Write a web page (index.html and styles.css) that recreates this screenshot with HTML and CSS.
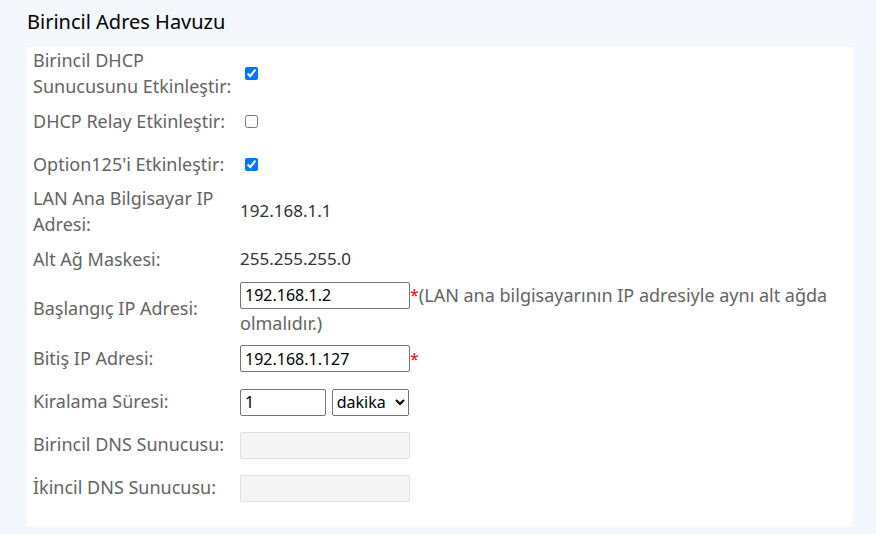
FILE: index.html
```html
<!DOCTYPE html>
<html lang="tr">
<head>
    <meta charset="UTF-8">
    <meta name="viewport" content="width=device-width, initial-scale=1.0">
    <title>DHCP Sunucusu</title>
    <link rel="stylesheet" href="styles.css">
</head>
<body>
    <div class="page">
        <h2 class="section-title">Birincil Adres Havuzu</h2>

        <div class="panel">
            <table class="form-table">
                <tr>
                    <td class="label">Birincil DHCP<br>Sunucusunu Etkinleştir:</td>
                    <td class="value"><input type="checkbox" id="primaryDhcp" checked></td>
                </tr>
                <tr>
                    <td class="label">DHCP Relay Etkinleştir:</td>
                    <td class="value"><input type="checkbox" id="dhcpRelay"></td>
                </tr>
                <tr>
                    <td class="label">Option125'i Etkinleştir:</td>
                    <td class="value"><input type="checkbox" id="option125" checked></td>
                </tr>
                <tr>
                    <td class="label">LAN Ana Bilgisayar IP Adresi:</td>
                    <td class="value text">192.168.1.1</td>
                </tr>
                <tr>
                    <td class="label">Alt Ağ Maskesi:</td>
                    <td class="value text">255.255.255.0</td>
                </tr>
                <tr>
                    <td class="label">Başlangıç IP Adresi:</td>
                    <td class="value">
                        <input type="text" class="ip-input" id="startIp" value="192.168.1.2"><span class="required">*</span><span class="hint">(LAN ana bilgisayarının IP adresiyle aynı alt ağda olmalıdır.)</span>
                    </td>
                </tr>
                <tr>
                    <td class="label">Bitiş IP Adresi:</td>
                    <td class="value">
                        <input type="text" class="ip-input" id="endIp" value="192.168.1.127"><span class="required">*</span>
                    </td>
                </tr>
                <tr>
                    <td class="label">Kiralama Süresi:</td>
                    <td class="value">
                        <input type="text" class="lease-input" id="leaseTime" value="1">
                        <select class="lease-unit" id="leaseUnit">
                            <option value="min" selected>dakika</option>
                            <option value="hour">saat</option>
                            <option value="day">gün</option>
                        </select>
                    </td>
                </tr>
                <tr>
                    <td class="label">Birincil DNS Sunucusu:</td>
                    <td class="value"><input type="text" class="ip-input" id="dns1" disabled></td>
                </tr>
                <tr>
                    <td class="label">İkincil DNS Sunucusu:</td>
                    <td class="value"><input type="text" class="ip-input" id="dns2" disabled></td>
                </tr>
            </table>
        </div>
    </div>
</body>
</html>
```

FILE: styles.css
```css
body {
    margin: 0;
    background: #f4f7fb;
    font-family: "Noto Sans", Arial, sans-serif;
    font-size: 18px;
}
.page {
    padding: 0 24px 9px 27px;
}
.section-title {
    margin: 0;
    padding-top: 9px;
    height: 38px;
    font-size: 20px;
    font-weight: normal;
    line-height: 26px;
    color: #000;
}
.panel {
    background: #fff;
    padding: 0 6px 18px 6px;
}
.form-table {
    width: 100%;
    border-collapse: collapse;
}
.form-table td {
    height: 43px;
    padding: 0;
    line-height: 26px;
    vertical-align: middle;
}
.label {
    width: 207px;
    color: #646464;
}
.value {
    color: #646464;
}
.value.text {
    font-size: 17px;
    color: #333;
}
input[type="checkbox"] {
    margin: 0 3px 3px 5px;
    vertical-align: middle;
}
.ip-input, .lease-input {
    height: 27px;
    box-sizing: border-box;
    margin: -1px 0;
    padding: 1px 4px;
    border: 1px solid #767676;
    border-radius: 2px;
    font-family: inherit;
    font-size: 16px;
    color: #000;
    vertical-align: middle;
}
.ip-input {
    width: 170px;
}
.lease-input {
    width: 86px;
}
.ip-input:disabled {
    background: #f5f5f5;
    border-color: #e0e0e0;
}
.lease-unit {
    width: 77px;
    height: 27px;
    margin: -1px 0 -1px 1px;
    font-family: inherit;
    font-size: 16px;
    color: #000;
    vertical-align: middle;
}
.required {
    color: #f00;
    font-size: 16px;
    vertical-align: middle;
}
.hint {
    vertical-align: middle;
}
```
